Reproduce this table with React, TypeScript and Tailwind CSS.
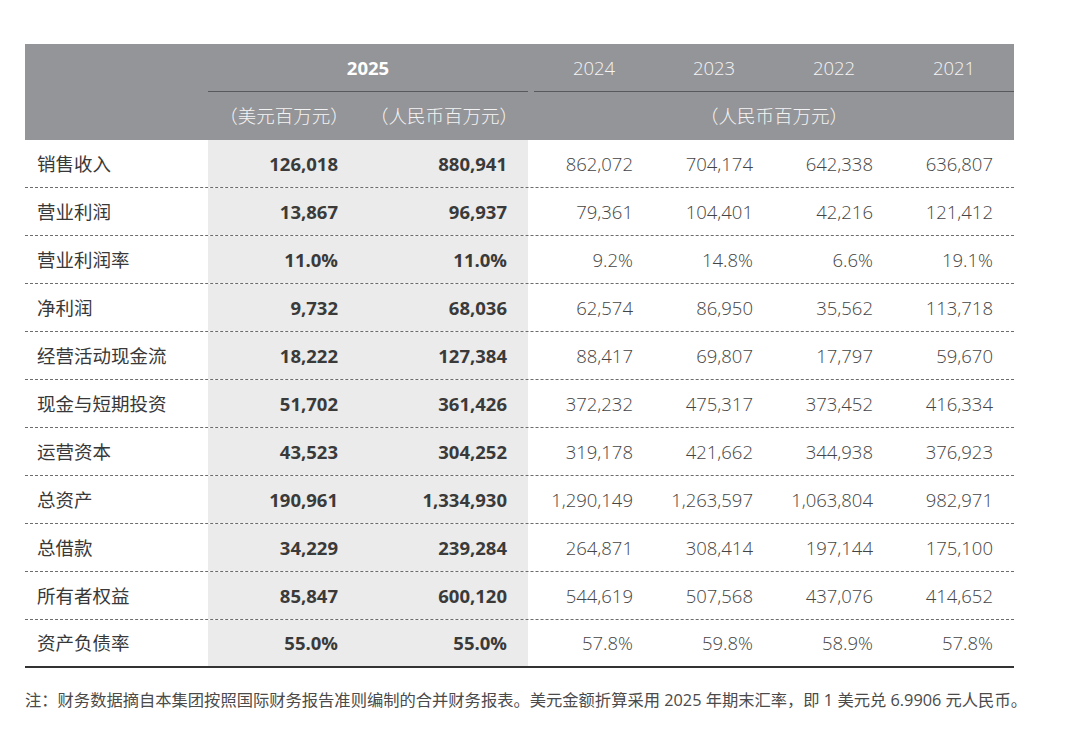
const rows: [string, string, string, string, string, string, string][] = [
  ["销售收入", "126,018", "880,941", "862,072", "704,174", "642,338", "636,807"],
  ["营业利润", "13,867", "96,937", "79,361", "104,401", "42,216", "121,412"],
  ["营业利润率", "11.0%", "11.0%", "9.2%", "14.8%", "6.6%", "19.1%"],
  ["净利润", "9,732", "68,036", "62,574", "86,950", "35,562", "113,718"],
  ["经营活动现金流", "18,222", "127,384", "88,417", "69,807", "17,797", "59,670"],
  ["现金与短期投资", "51,702", "361,426", "372,232", "475,317", "373,452", "416,334"],
  ["运营资本", "43,523", "304,252", "319,178", "421,662", "344,938", "376,923"],
  ["总资产", "190,961", "1,334,930", "1,290,149", "1,263,597", "1,063,804", "982,971"],
  ["总借款", "34,229", "239,284", "264,871", "308,414", "197,144", "175,100"],
  ["所有者权益", "85,847", "600,120", "544,619", "507,568", "437,076", "414,652"],
  ["资产负债率", "55.0%", "55.0%", "57.8%", "59.8%", "58.9%", "57.8%"],
];

const font = { fontFamily: '"Open Sans", "Noto Sans CJK SC", sans-serif' };

export default function App() {
  return (
    <div className="min-h-[730px] w-[1080px] bg-white pt-[44px] pl-[25px] text-[#333]" style={font}>
      <div className="w-[989px]">
        {/* header */}
        <div className="bg-[#949598] text-white">
          <div className="flex h-[48px]">
            <div className="w-[183px]" />
            <div className="flex w-[320px] items-center justify-center border-b-[1.5px] border-[#58595b] text-[18.5px] font-bold">
              2025
            </div>
            <div className="w-[6px]" />
            <div className="flex w-[480px] border-b-[1.5px] border-[#58595b] text-[18.5px] font-light text-[#f4f4f4]">
              {["2024", "2023", "2022", "2021"].map((y) => (
                <div key={y} className="flex w-[120px] items-center justify-center">
                  {y}
                </div>
              ))}
            </div>
          </div>
          <div className="flex h-[48px] items-center text-[18.5px] font-light text-[#f4f4f4]">
            <div className="w-[183px]" />
            <div className="w-[160px] pr-[8px] text-center">（美元百万元）</div>
            <div className="w-[160px] pr-[8px] text-center">（人民币百万元）</div>
            <div className="w-[6px]" />
            <div className="w-[480px] text-center">（人民币百万元）</div>
          </div>
        </div>

        {/* body */}
        {rows.map((r, i) => {
          const last = i === rows.length - 1;
          const line = last ? "border-b-2 border-solid border-[#333]" : "border-b border-dashed border-[#6d6d6d]";
          return (
            <div key={r[0]} className={`flex h-[48px] ${line}`}>
              <div className="flex w-[183px] items-center pl-[12px] text-[18.5px] text-[#383838]">{r[0]}</div>
              <div className="flex w-[160px] items-center justify-end bg-[#ebebeb] pr-[30px] text-[18.5px] font-bold text-[#3a3a3a]">
                {r[1]}
              </div>
              <div className="flex w-[160px] items-center justify-end bg-[#ebebeb] pr-[21px] text-[18.5px] font-bold text-[#3a3a3a]">
                {r[2]}
              </div>
              <div className="w-[6px]" />
              {r.slice(3).map((v, j) => (
                <div key={j} className="flex w-[120px] items-center justify-end pr-[21px] text-[18.5px] font-light text-[#444]">
                  {v}
                </div>
              ))}
            </div>
          );
        })}
      </div>

      <p className="mt-[22px] text-[16.3px] leading-[20px] text-[#4a4a4a]">
        注：财务数据摘自本集团按照国际财务报告准则编制的合并财务报表。美元金额折算采用 2025 年期末汇率，即 1 美元兑 6.9906 元人民币。
      </p>
    </div>
  );
}
